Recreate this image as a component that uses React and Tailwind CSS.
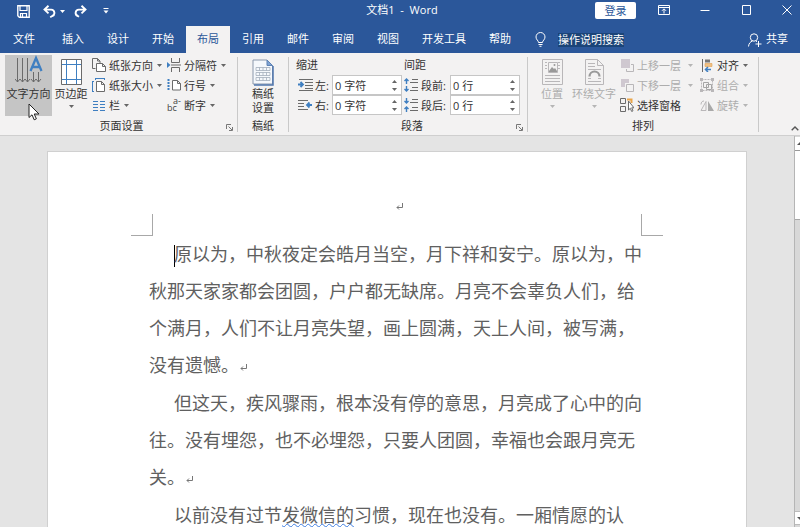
import React from "react";

const TABS = ["插入", "设计", "开始", "布局", "引用", "邮件", "审阅", "视图", "开发工具", "帮助"];

const Svg = ({ w = 14, h = 14, children, className = "" }) => (
  <svg width={w} height={h} viewBox={`0 0 ${w} ${h}`} fill="none" className={`shrink-0 ${className}`} aria-hidden="true">
    {children}
  </svg>
);

const Caret = ({ color = "#666" }) => (
  <Svg w={5} h={3}>
    <path d="M0 0h5L2.5 3z" fill={color} />
  </Svg>
);

/* ---------- title bar ---------- */

function TitleBar() {
  return (
    <div className="grid h-[26px] grid-cols-[1fr_auto_1fr] items-start text-white">
      <div className="flex h-[22px] items-center pl-[17px]">
        <button aria-label="保存">
          <Svg w={13} h={13}>
            <path d="M.8.8h11.4v11.4H2.3L.8 10.8z" stroke="#fff" strokeWidth="1.4" />
            <path d="M3 1v4.5h7V1M3.5 12V8.5h6V12M5.5 9v3" stroke="#fff" strokeWidth="1.2" />
          </Svg>
        </button>
        <button aria-label="撤消" className="ml-[13px] flex items-center gap-1">
          <Svg w={13} h={13}>
            <path d="M5.5.8 1.5 4.6l4 3.8M2 4.6h6.2a3.3 3.3 0 0 1 1 6.4l-2 1.2" stroke="#fff" strokeWidth="1.9" />
          </Svg>
          <Caret color="#fff" />
        </button>
        <button aria-label="恢复" className="ml-[9px]">
          <Svg w={13} h={13}>
            <path d="M7.5.8l4 3.8-4 3.8M11 4.6H4.8a3.3 3.3 0 0 0-1 6.4l1.2.8" stroke="#fff" strokeWidth="1.9" />
          </Svg>
        </button>
        <button aria-label="自定义快速访问工具栏" className="ml-4">
          <Svg w={6} h={6}>
            <path d="M.5.5h5" stroke="#fff" />
            <path d="M.5 2.5h5L3 5.5z" fill="#fff" />
          </Svg>
        </button>
      </div>
      <h1 className="h-5 pl-1 text-[11px] leading-5 whitespace-pre">文档1  -  Word</h1>
      <div className="flex items-center justify-end gap-[29px] pr-[7px]">
        <button className="-mr-[7px] mt-0.5 h-[17px] w-[41px] rounded-xs bg-white text-[11px] leading-[17px] text-[#2b579a]">登录</button>
        <button aria-label="功能区显示选项">
          <Svg w={12} h={10}>
            <path d="M.5.5h11v9H.5zM.5 2.5h11M6 8.5V4M4 5.8l2-2 2 2" stroke="#fff" />
          </Svg>
        </button>
        <button aria-label="最小化">
          <Svg w={12} h={10}>
            <path d="M1.5 5.5h9" stroke="#fff" />
          </Svg>
        </button>
        <button aria-label="最大化">
          <Svg w={12} h={10}>
            <path d="M2.5.5h8v9h-8z" stroke="#fff" />
          </Svg>
        </button>
        <button aria-label="关闭">
          <Svg w={12} h={10}>
            <path d="M1.500.5l9 9M10.500.5l-9 9" stroke="#fff" />
          </Svg>
        </button>
      </div>
    </div>
  );
}

function TabBar() {
  return (
    <nav className="flex h-[27px] items-stretch text-[11px] whitespace-nowrap text-white">
      <button className="mr-[3px] px-[13px]">文件</button>
      <div className="flex gap-px">
        {TABS.map((t) => (
          <button key={t} className={t === "布局" ? "bg-[#f3f2f2] px-[11px] text-[#2b579a]" : "px-[11px]"}>
            {t}
          </button>
        ))}
      </div>
      <button className="ml-[13px] flex items-center gap-3">
        <Svg w={11} h={15}>
          <path d="M3.500 10.500C3.500 8.500 1 7.800 1 5a4.500 4.500 0 0 1 9 0c0 2.800-2.500 3.500-2.500 5.500zM3.500 12.500h4M4.500 14.300h2" stroke="#fff" />
        </Svg>
        <span className="bg-[#1b4478] leading-[14px]">操作说明搜索</span>
      </button>
      <button className="ml-auto flex items-center gap-1 pr-3">
        <Svg w={14} h={14}>
          <circle cx="6" cy="4.500" r="3.700" stroke="#fff" />
          <path d="M.5 13.500C.8 10.500 2.300 8.700 4.500 8M8 8l1 .8M10.500 8v6M7.500 11h6" stroke="#fff" />
        </Svg>
        共享
      </button>
    </nav>
  );
}

/* ---------- ribbon building blocks ---------- */

function Group({ label, launcher, className = "", children }) {
  return (
    <section className="flex">
      <div className={`flex flex-col ${className}`}>
        <div className="flex h-[61px]">{children}</div>
        <div className="flex h-[18px] items-center">
          <span className="flex-1 text-center">{label}</span>
          {launcher && (
            <button aria-label={`${label}选项`} className="-ml-3 mt-1 mr-1">
              <Svg w={7} h={7}>
                <path d="M.5 5V.5H5M2.500 2.500l3.500 3.500M6.500 3v3.500H3" stroke="#777" />
              </Svg>
            </button>
          )}
        </div>
      </div>
      <div className="my-[2px] w-px bg-[#c9c9c9]" />
    </section>
  );
}

function SmallButton({ icon, label, arrow = true, disabled = false, split = false }) {
  return (
    <button
      disabled={disabled}
      className={`flex h-5 items-center gap-[3px] ${disabled ? "text-[#adadad]" : "text-[#333]"}`}
    >
      <span className="flex w-[14px] justify-center">{icon}</span>
      <span>{label}</span>
      {arrow && (
        <span className={split ? "ml-1" : "ml-px"}>
          <Caret color={disabled ? "#b5b5b5" : "#666"} />
        </span>
      )}
    </button>
  );
}

function Spin({ id, icon, label, value }) {
  return (
    <div className="flex h-5 items-center">
      <span className="flex w-[17px]">{icon}</span>
      <label htmlFor={id} className="flex-1">{label}</label>
      <div className="flex h-5 w-[70px] items-center border border-[#c6c6c6] bg-white">
        <input id={id} defaultValue={value} className="w-0 flex-1 bg-transparent pl-0.5 text-[#333] outline-none" />
        <div className="flex flex-col gap-[5px] pr-1">
          <button aria-label={`${label}增加`}>
            <Svg w={5} h={3} className="block">
              <path d="M0 3h5L2.500 0z" fill="#666" />
            </Svg>
          </button>
          <button aria-label={`${label}减少`}>
            <Svg w={5} h={3} className="block">
              <path d="M0 0h5L2.500 3z" fill="#666" />
            </Svg>
          </button>
        </div>
      </div>
    </div>
  );
}

/* ---------- ribbon icons ---------- */

const G = "#6b6b6b";
const B = "#3f7fc1";
const D = "#b9b7b9";

const TextDirectionIcon = () => (
  <Svg w={28} h={29}>
    <path d="M2.500 3v24M7.500 3v24M12.500 3v24M18.500 17v10M23.500 17v10" stroke={G} />
    <path d="M0 24l2.500 3L5 24M5 24l2.500 3 2.500-3M10 24l2.500 3 2.500-3M16 24l2.500 3 2.500-3M21 24l2.500 3 2.500-3" stroke={G} />
    <path d="M15.500 16 21 3l5.500 13M17.500 12h7.500" stroke={B} strokeWidth="2.300" />
  </Svg>
);
const MarginsIcon = () => (
  <Svg w={21} h={26}>
    <path d="M.5.5h20v25H.5z" fill="#fff" stroke={G} />
    <path d="M5.500 1v24M15.500 1v24M1 5.500h19M1 20.500h19" stroke={B} />
  </Svg>
);
const OrientationIcon = () => (
  <Svg>
    <path d="M.5 10.500V.5h5l2.500 2.500v2M.5 10.500h3M5.500.5V3H8" stroke={G} />
    <path d="M4.500 5.500h6l3 3v5h-9zM10.500 5.500v3h3" fill="#fff" stroke={G} />
  </Svg>
);
const SizeIcon = () => (
  <Svg>
    <path d="M3 .5h10M3.500 0v2M12.500 0v2M.5 3.500v10M0 3.500h2M0 13.500h2" stroke={B} />
    <path d="M4.500 3.500h5l3 3v7h-8zM9.500 3.500v3h3" fill="#fff" stroke={G} />
  </Svg>
);
const ColumnsIcon = () => (
  <Svg w={12} h={11}>
    <path d="M0 1.500h5M0 4.500h5M0 7.500h5M0 10.500h5M7 1.500h5M7 4.500h5M7 7.500h5M7 10.500h5" stroke={B} />
  </Svg>
);
const BreaksIcon = () => (
  <Svg>
    <path d="M4.500 0v4.500h8V0M4.500 14V9.500h8V14M4 7h10" stroke={G} />
    <path d="M0 4l3.500 3L0 10z" fill={B} />
  </Svg>
);
const LineNoIcon = () => (
  <Svg>
    <path d="M1.500 1v12" stroke={B} strokeWidth="2" strokeDasharray="2 1" />
    <path d="M5.500 2.500h5l3 3v6.500h-8zM10.500 2.500v3h3" fill="#fff" stroke={G} />
  </Svg>
);
const HyphenIcon = () => (
  <span className="flex w-[14px] flex-col text-[9px] text-[#444]">
    <span className="text-right leading-[6px]">a-</span>
    <span className="text-left leading-[8px]">bc</span>
  </span>
);
const ManuscriptIcon = () => (
  <Svg w={22} h={27}>
    <path d="M1 1h14l5.500 5.500V25H1z" fill="#f5f8fc" stroke="#8a97ab" />
    <path d="M15 1v5.500h5.500z" fill="#7fa3d3" stroke="#5f83b5" />
    <path d="M21 7v19H2" stroke="#4f76ad" strokeWidth="1.500" />
    <path d="M4 8.500h14v3H4zM4 13.500h14v3H4zM4 18.500h14v3H4zM7.500 8.500v3M11 8.500v3M14.500 8.500v3M7.500 13.500v3M11 13.500v3M14.500 13.500v3M7.500 18.500v3M11 18.500v3M14.500 18.500v3" stroke="#a3adbb" strokeWidth=".8" />
  </Svg>
);
const IndentLeft = () => (
  <Svg w={15} h={12}>
    <path d="M1 .5h14M7 3.500h8M7 6.500h8M7 9.500h8M1 11.500h14" stroke={G} />
    <path d="M0 5.500h4M2.500 3l2.500 2.500L2.500 8" stroke={B} strokeWidth="1.800" />
  </Svg>
);
const IndentRight = () => (
  <Svg w={15} h={12}>
    <path d="M0 1.500h10M0 4.500h6M0 7.500h6M0 10.500h10" stroke={G} />
    <path d="M14 6H9M11.500 3.500 9 6l2.500 2.500" stroke={B} strokeWidth="1.800" />
  </Svg>
);
const SpaceBefore = () => (
  <Svg w={14} h={14}>
    <path d="M2.500 6V1M.5 3l2-2 2 2M2.500 8v5M.5 11l2 2 2-2" stroke={B} strokeWidth="1.400" />
    <path d="M8 1.500h6M6 4.500h8M8 9.500h6M6 12.500h8" stroke={G} />
  </Svg>
);
const SpaceAfter = () => (
  <Svg w={14} h={14}>
    <path d="M2.500 0v5M.5 3l2 2 2-2M2.500 14V9M.5 11l2-2 2 2" stroke={B} strokeWidth="1.400" />
    <path d="M8 1.500h6M6 4.500h8M8 9.500h6M6 12.500h8" stroke={G} />
  </Svg>
);
const PositionIcon = () => (
  <Svg w={21} h={26}>
    <path d="M.5.5h20v25H.5z" stroke={D} />
    <path d="M3 3.500h2M16 3.500h2M3 6.500h2M16 6.500h2M3 9.500h2M16 9.500h2M3 16.500h15M3 19.500h15M3 22.500h15" stroke={D} />
    <path d="M6.500 3.500h9v10h-9z" stroke={D} />
    <path d="M7 12l3-4 2 2 1-1 2 3v1H7z" fill="#999" />
    <circle cx="12.500" cy="6" r="1" fill="#999" />
  </Svg>
);
const WrapIcon = () => (
  <Svg w={19} h={26}>
    <path d="M.5.5h12l6 6v19H.5zM12.500.5v6h6" stroke={D} />
    <path d="M3 4.500h7M3 7.500h7M3 10.500h13M3 19.500h3M13 19.500h3M3 22.500h13" stroke={D} />
    <path d="M4.500 17.500a5 5 0 0 1 10 0" stroke="#999" strokeWidth="2.200" />
  </Svg>
);
const ForwardIcon = () => (
  <Svg w={13} h={13}>
    <path d="M0 0h9v9H0z" fill="#cfc8d0" />
    <path d="M10 5.500h2.500v7h-7V10" stroke={D} />
  </Svg>
);
const BackwardIcon = () => (
  <Svg w={13} h={13}>
    <path d="M0 0h8v4H4v4H0z" fill="#cfc8d0" />
    <path d="M5.500 5.500h7v7h-7z" stroke={D} />
  </Svg>
);
const SelectIcon = () => (
  <Svg w={14} h={14}>
    <path d="M.5.5h5v5h-5zM.5 8.500h5v5h-5z" stroke={G} />
    <path d="M7 1.500h4.500V5" stroke="#eaa54a" strokeWidth="2" />
    <path d="M8.500 3v9l1.800-1.700 1.400 3.200 1.300-.7-1.300-3H14z" fill="#fff" stroke={G} />
  </Svg>
);
const AlignIcon = () => (
  <Svg w={12} h={13}>
    <path d="M1.500 0v13" stroke={G} />
    <path d="M4 .5h5v3H4z" fill="#777" />
    <path d="M4 4.500h7v3H4z" fill="#efc085" stroke="#e0a050" strokeWidth=".6" />
    <path d="M10 10.500H4.500M7 8l-2.500 2.500L7 13" stroke={B} strokeWidth="1.500" />
  </Svg>
);
const GroupIcon = () => (
  <Svg>
    <path d="M1.500 1.500h11v11h-11z" stroke={D} strokeDasharray="2 1" />
    <path d="M3.500 4.500h5v5h-5zM6.500 6.500h5v5h-5z" stroke="#a5a5a5" />
    <path d="M0 0h3v3H0zM11 0h3v3h-3zM0 11h3v3H0zM11 11h3v3h-3z" fill={D} />
  </Svg>
);
const RotateIcon = () => (
  <Svg w={14} h={11}>
    <path d="M6 1.500v9H1z" stroke={D} />
    <path d="M8 1l6 10H8z" fill="#a9a9a9" />
    <path d="M1 4.500C1 2 2.500 1 4 1" stroke={D} />
  </Svg>
);

function Ribbon() {
  return (
    <div className="flex h-[83px] items-start border-b border-[#cfcfcf] bg-[#f3f2f2] pt-[2px] text-[11px] leading-[13px] whitespace-nowrap text-[#333]">
      <Group label="页面设置" launcher className="w-[237px] pl-[5px]">
        <button className="relative flex w-[47px] flex-col items-center bg-[#c5c5c5]">
          <TextDirectionIcon />
          <span className="mt-[3px]">文字方向</span>
          <Svg w={12} h={18} className="absolute top-12 left-[23px]">
            <path d="M1 1v13.500l3-2.700 2.200 5 2.200-1-2.200-4.800H11z" fill="#fff" stroke="#222" />
          </Svg>
        </button>
        <button className="ml-[2px] flex w-[34px] flex-col items-center pt-1">
          <MarginsIcon />
          <span className="mt-0.5 mb-[5px]">页边距</span>
          <Caret />
        </button>
        <div className="ml-1 flex w-[75px] flex-col">
          <SmallButton icon={<OrientationIcon />} label="纸张方向" />
          <SmallButton icon={<SizeIcon />} label="纸张大小" />
          <SmallButton icon={<ColumnsIcon />} label="栏" />
        </div>
        <div className="flex flex-col">
          <SmallButton icon={<BreaksIcon />} label="分隔符" />
          <SmallButton icon={<LineNoIcon />} label="行号" />
          <SmallButton icon={<HyphenIcon />} label="断字" />
        </div>
      </Group>

      <Group label="稿纸" className="w-[50px]">
        <button className="flex w-full flex-col items-center pt-1">
          <ManuscriptIcon />
          <span className="mt-px leading-[14px]">稿纸</span>
          <span className="leading-[14px]">设置</span>
        </button>
      </Group>

      <Group label="段落" launcher className="w-[238px] pl-[7px]">
        <div className="flex w-[106px] flex-col">
          <span className="h-5 pt-[3px]">缩进</span>
          <div className="pl-[2px]">
            <Spin id="indent-left" icon={<IndentLeft />} label="左:" value="0 字符" />
            <Spin id="indent-right" icon={<IndentRight />} label="右:" value="0 字符" />
          </div>
        </div>
        <div className="ml-[2px] flex w-[116px] flex-col">
          <span className="h-5 pt-[3px]">间距</span>
          <Spin id="space-before" icon={<SpaceBefore />} label="段前:" value="0 行" />
          <Spin id="space-after" icon={<SpaceAfter />} label="段后:" value="0 行" />
        </div>
      </Group>

      <Group label="排列" className="w-[230px]">
        <button disabled className="ml-2 flex w-8 flex-col items-center pt-1 text-[#adadad]">
          <PositionIcon />
          <span className="mt-0.5 mb-[5px]">位置</span>
          <Caret color="#b5b5b5" />
        </button>
        <button disabled className="ml-1 flex w-[44px] flex-col items-center pt-1 text-[#adadad]">
          <WrapIcon />
          <span className="mt-0.5 mb-[5px]">环绕文字</span>
          <Caret color="#b5b5b5" />
        </button>
        <div className="ml-1 flex w-[80px] flex-col">
          <SmallButton icon={<ForwardIcon />} label="上移一层" disabled split />
          <SmallButton icon={<BackwardIcon />} label="下移一层" disabled split />
          <SmallButton icon={<SelectIcon />} label="选择窗格" arrow={false} />
        </div>
        <div className="flex flex-col">
          <SmallButton icon={<AlignIcon />} label="对齐" />
          <SmallButton icon={<GroupIcon />} label="组合" disabled />
          <SmallButton icon={<RotateIcon />} label="旋转" disabled />
        </div>
      </Group>

      <button aria-label="折叠功能区" className="mb-1 ml-auto self-end pr-px">
        <Svg w={8} h={5}>
          <path d="M.7 4.300 4 1l3.300 3.300" stroke="#555" strokeWidth="1.400" />
        </Svg>
      </button>
    </div>
  );
}

/* ---------- document ---------- */

const Return = () => (
  <Svg w={7} h={7} className="ml-px inline-block">
    <path d="M6.500 0v4.500H1M3 2.500l-2 2 2 2" stroke="#777" />
  </Svg>
);

const Line = ({ children, indent = false }) => (
  <span className={indent ? "block pl-[25px]" : "block"}>{children}</span>
);

function Page() {
  return (
    <article className="mx-auto min-h-[900px] w-full max-w-[700px] border border-[#d0d0d0] bg-white">
      <div className="flex h-[62px] items-end justify-center pb-1 pl-1">
        <Return />
      </div>
      <div className="flex h-[22px] justify-between px-[83px]">
        <div className="w-[22px] border-r border-b border-[#a8a8a8]" />
        <div className="w-[22px] border-b border-l border-[#a8a8a8]" />
      </div>
      <div className="flex flex-col gap-px pl-[101px] text-[18px] leading-[37px] whitespace-nowrap text-[#606060]">
        <p>
          <Line indent>
            <span className="-mr-px inline-block h-[22px] w-px bg-black align-middle" />
            原以为，中秋夜定会皓月当空，月下祥和安宁。原以为，中
          </Line>
          <Line>秋那天家家都会团圆，户户都无缺席。月亮不会辜负人们，给</Line>
          <Line>个满月，人们不让月亮失望，画上圆满，天上人间，被写满，</Line>
          <Line>没有遗憾。<Return /></Line>
        </p>
        <p>
          <Line indent>但这天，疾风骤雨，根本没有停的意思，月亮成了心中的向</Line>
          <Line>往。没有埋怨，也不必埋怨，只要人团圆，幸福也会跟月亮无</Line>
          <Line>关。<Return /></Line>
        </p>
        <p>
          <Line indent>
            以前没有过节
            <span className="underline decoration-[#3f7ee0] decoration-wavy decoration-1 underline-offset-1">发微信的</span>
            习惯，现在也没有。一厢情愿的认
          </Line>
        </p>
      </div>
    </article>
  );
}

function ScrollBar() {
  return (
    <div className="flex w-[6px] flex-col border-l border-[#b5b5b5] bg-[#d8d8d8] pt-px pb-[2px]">
      <button aria-label="向上滚动" className="flex h-[14px] items-center justify-end border-b border-[#999] bg-white">
        <Svg w={3} h={3}>
          <path d="M0 3h3V0z" fill="#555" />
        </Svg>
      </button>
      <div className="h-[69px] border-b border-[#a8a8a8] bg-white" />
      <button aria-label="向下滚动" className="mt-auto flex h-[14px] items-center justify-end border-y border-[#bbb] bg-white">
        <Svg w={3} h={3}>
          <path d="M0 0h3v3z" fill="#555" />
        </Svg>
      </button>
    </div>
  );
}

export default function App() {
  return (
    <div className="flex h-screen flex-col overflow-hidden bg-[#e4e4e4] font-['Open_Sans','Noto_Sans_CJK_SC',sans-serif]">
      <header className="bg-[#2b579a]">
        <TitleBar />
        <TabBar />
      </header>
      <Ribbon />
      <main className="flex min-h-0 flex-1">
        <div className="min-w-0 flex-1 overflow-hidden pt-[15px]">
          <Page />
        </div>
        <ScrollBar />
      </main>
    </div>
  );
}
